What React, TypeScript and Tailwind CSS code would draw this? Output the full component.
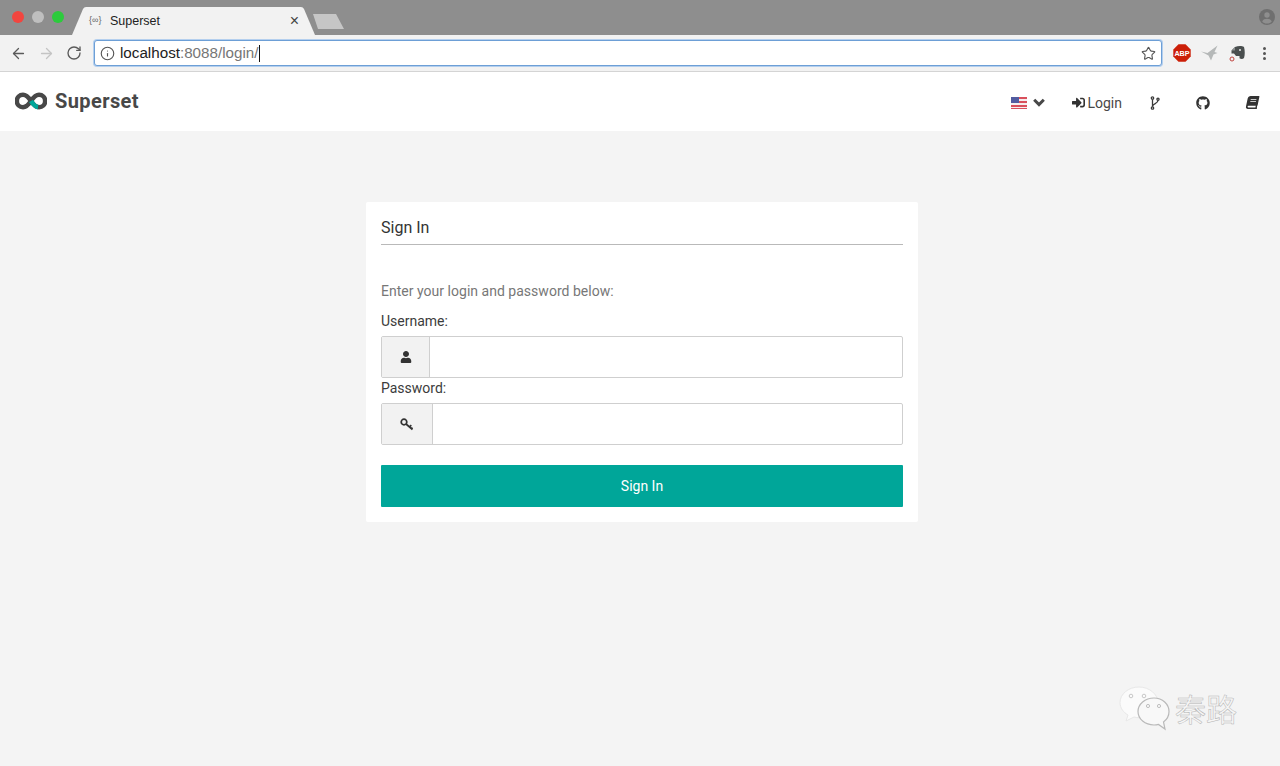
import { FaBook, FaGithub, FaSignInAlt, FaUser } from 'react-icons/fa';
import { ArrowLeft, ArrowRight, Info, RotateCw, Star } from 'lucide-react';

function SupersetLogo() {
  return (
    <svg className="mb-[2px]" width="32" height="18" viewBox="0 0 32 18" fill="none">
      <path d="M16 9C13 4.500 11 2.800 8 2.800a6.200 6.200 0 0 0 0 12.400c3 0 5-1.700 8-6.200c3-4.500 5-6.200 8-6.200a6.200 6.200 0 0 1 0 12.400c-3 0-5-1.700-8-6.200Z" stroke="#484848" strokeWidth="4.600" />
      <path d="M16 9c2.500 3.800 4.500 5.800 7 6.100" stroke="#00a699" strokeWidth="4.600" />
    </svg>
  );
}

function UsFlag() {
  return (
    <svg width="16" height="12" viewBox="0 0 16 12">
      <rect width="16" height="12" fill="#f5eeee" />
      <rect y="0" width="16" height="2" fill="#d9505c" />
      <rect y="4" width="16" height="2" fill="#d9505c" />
      <rect y="8" width="16" height="2" fill="#d9505c" />
      <rect y="11" width="16" height="1" fill="#d9505c" />
      <rect width="8" height="6" fill="#525ca0" />
    </svg>
  );
}

function ChevronIcon() {
  return (
    <svg width="12" height="9" viewBox="0 0 12 9" fill="none" stroke="#484848" strokeWidth="3">
      <path d="M1.200 1.800 6 6.600l4.800-4.800" />
    </svg>
  );
}

function ForkIcon() {
  return (
    <svg width="10" height="14" viewBox="0 0 10 14" fill="none" stroke="#3a3a3a" strokeWidth="1.300">
      <circle cx="2.500" cy="2" r="1.200" />
      <circle cx="8" cy="3.200" r="1.100" />
      <circle cx="2.500" cy="12" r="1.200" />
      <path d="M2.500 3.200v7.600M8 4.300C8 8 3 7 2.500 10.300" />
    </svg>
  );
}

function KeyIcon() {
  return (
    <svg width="14" height="13" viewBox="0 0 14 13" fill="none" stroke="#333" strokeWidth="1.700">
      <circle cx="4" cy="4" r="2.800" />
      <path d="M6 6l6.500 5.500M9.500 9l1.800-1.800M11.500 10.700l1-1" />
    </svg>
  );
}

function ProfileIcon() {
  return (
    <svg width="16" height="16" viewBox="0 0 16 16">
      <circle cx="8" cy="8" r="8" fill="#6f6f6f" />
      <circle cx="8" cy="6" r="2.700" fill="#8e8e8e" />
      <path d="M3.200 12.500C4 10.500 6 9.800 8 9.800s4 .7 4.800 2.700C11.500 14 10 14.600 8 14.600s-3.500-.6-4.800-2.100Z" fill="#8e8e8e" />
    </svg>
  );
}

function AbpIcon() {
  return (
    <svg width="18" height="18" viewBox="0 0 18 18">
      <polygon points="5.500,0.300 12.500,0.300 17.700,5.500 17.700,12.500 12.500,17.700 5.500,17.700 0.300,12.500 0.300,5.500" fill="#cc1f08" />
      <text x="9" y="11.700" textAnchor="middle" fontSize="7.200" fontWeight="700" fill="#fff" fontFamily="Liberation Sans, sans-serif">ABP</text>
    </svg>
  );
}

function BirdIcon() {
  return (
    <svg width="17" height="16" viewBox="0 0 17 16">
      <path d="M0 6.500l6.500 1.500L16.500.5 13.500 7l3 1-4 1.500L10 15.500 7.500 10.500Z" fill="#b5b8b8" />
    </svg>
  );
}

function EvernoteIcon() {
  return (
    <svg width="17" height="17" viewBox="0 0 17 17">
      <path d="M2.500 5.500 6 2c3-1.200 7-1.200 9 0 1 3.500 1 8 0 11-1 1.200-3.200 1.200-4.500.2V11H7L5 8.500H2.500Z" fill="#4a4f4f" />
      <path d="M6 2v3.500H2.500Z" fill="#8a8e8e" />
      <circle cx="11" cy="5" r="1" fill="#e8e8e8" />
      <circle cx="3" cy="14" r="2" fill="#f2f2f2" stroke="#c0443f" strokeWidth="1" />
    </svg>
  );
}

function WechatMark() {
  return (
    <svg width="52" height="46" viewBox="0 0 52 46">
      <path d="M20 2C9.500 2 1 9 1 17.500c0 5.500 3.500 10 8 12.500l-2 6 8-4c2 .5 3.500.7 5 .7C30.500 32.700 39 25.500 39 17.500S30.500 2 20 2Z" fill="#fbfbfb" stroke="#e8e8e8" />
      <path d="M35 13c-9 0-16 6-16 13.500S26 40 35 40c1.500 0 3-.2 4.500-.6L46 44l-1.500-7c3.500-2.500 5.500-6.200 5.500-10.500C50 19 43.500 13 35 13Z" fill="#f8f8f8" stroke="#b9b9b9" strokeWidth="1.200" />
      <circle cx="12" cy="11" r="1.800" fill="none" stroke="#c8c8c8" />
      <circle cx="25" cy="11" r="1.800" fill="none" stroke="#c8c8c8" />
      <circle cx="29" cy="21" r="1.600" fill="none" stroke="#c0c0c0" />
      <circle cx="40" cy="21" r="1.600" fill="none" stroke="#c0c0c0" />
    </svg>
  );
}

function Field({ label, addonWidth, icon }: { label: string; addonWidth: string; icon: React.ReactNode }) {
  return (
    <div>
      <div className="text-sm leading-[20px] text-[#3c3c3c]">{label}</div>
      <div className="mt-[5px] flex h-[42px] rounded-[2px] border border-[#cfcfcf] bg-white">
        <div className={`${addonWidth} flex items-center justify-center border-r border-[#cfcfcf] bg-[#f2f2f2] text-[#333]`}>
          {icon}
        </div>
        <div className="flex-1" />
      </div>
    </div>
  );
}

export default function App() {
  return (
    <div className="relative flex h-[766px] w-[1280px] flex-col overflow-hidden bg-[#f4f4f4] font-['Roboto',sans-serif]">
      {/* Browser title bar */}
      <div className="flex h-[35px] items-end bg-[#8e8e8e] pr-[5px]">
        <div className="flex h-full items-center gap-[8px] pb-[2px] pl-[12px]">
          <span className="h-3 w-3 rounded-full bg-[#f2453f]" />
          <span className="h-3 w-3 rounded-full bg-[#bfbfbf]" />
          <span className="h-3 w-3 rounded-full bg-[#2ccb3c]" />
        </div>
        <div className="relative ml-[8px] flex h-[28px] w-[243px] items-center pl-[17px] pr-[16px]">
          <svg className="absolute inset-0" width="243" height="28" viewBox="0 0 243 28">
            <path d="M0 28 11 2Q12 0 14 0H229Q231 0 232 2L243 28Z" fill="#f2f2f2" />
          </svg>
          <span className="relative w-[21px] font-['Liberation_Sans',sans-serif] text-[9px] text-[#666]">{'{∞}'}</span>
          <span className="relative font-['Liberation_Sans',sans-serif] text-[12.500px] text-[#222]">Superset</span>
          <span className="relative ml-auto font-['Liberation_Sans',sans-serif] text-[16px] leading-none text-[#444]">×</span>
        </div>
        <svg className="mb-[5px] ml-[-3px]" width="33" height="16" viewBox="0 0 33 16">
          <path d="M1 0H24L32 15H6Z" fill="#c6c6c6" />
        </svg>
        <div className="mb-[10px] ml-auto"><ProfileIcon /></div>
      </div>

      {/* Browser toolbar */}
      <div className="flex h-[37px] items-center border-b border-[#d4d4d4] bg-[#f2f2f2] pl-[10px] pr-[8px]">
        <ArrowLeft size={17} color="#5a5a5a" strokeWidth={1.800} />
        <ArrowRight className="ml-[11px]" size={17} color="#c4c4c4" strokeWidth={1.800} />
        <RotateCw className="ml-[11px]" size={16} color="#5a5a5a" strokeWidth={2} />
        <div className="ml-[12px] flex h-[26px] w-[1068px] items-center rounded-[3px] border border-[#6d9fd6] bg-white pl-[5px] pr-[5px] font-['Liberation_Sans',sans-serif] text-[15.200px] shadow-[0_0_0_1px_#b4cfee]">
          <Info size={15} color="#555" strokeWidth={1.800} />
          <span className="ml-[5px] text-[#222]">localhost</span>
          <span className="text-[#767676]">:8088/login/</span>
          <span className="h-[17px] w-px bg-[#111]" />
          <Star className="ml-auto" size={15} color="#555" strokeWidth={1.800} />
        </div>
        <div className="ml-[11px]"><AbpIcon /></div>
        <div className="ml-[10px]"><BirdIcon /></div>
        <div className="ml-[11px]"><EvernoteIcon /></div>
        <div className="ml-[17px] flex flex-col gap-[2px]">
          <span className="h-[3px] w-[3px] rounded-full bg-[#555]" />
          <span className="h-[3px] w-[3px] rounded-full bg-[#555]" />
          <span className="h-[3px] w-[3px] rounded-full bg-[#555]" />
        </div>
      </div>

      {/* Navbar */}
      <div className="flex h-[59px] items-center bg-white pl-[15px]">
        <SupersetLogo />
        <span className="mb-[2px] ml-[8px] text-[20px] font-bold tracking-[0.4px] text-[#484848]">Superset</span>
        <div className="ml-auto flex items-center pt-[2px] text-sm text-[#484848]">
          <UsFlag />
          <div className="ml-[6px]"><ChevronIcon /></div>
          <FaSignInAlt className="ml-[27px]" size={13} color="#333" />
          <span className="ml-[2px]">Login</span>
          <div className="ml-[28px]"><ForkIcon /></div>
          <FaGithub className="ml-[36px]" size={14} color="#333" />
          <FaBook className="ml-[36px] -skew-x-12" size={13} color="#333" />
          <div className="w-[21px]" />
        </div>
      </div>

      {/* Login card */}
      <div className="ml-[366px] mt-[71px] h-[320px] w-[552px] rounded-[2px] bg-white px-[15px] pt-[16px]">
        <div className="h-[27px] border-b border-[#b9b9b9] text-[16px] leading-[20px] text-[#333]">Sign In</div>
        <div className="mt-[36px] text-sm leading-[20px] tracking-[0.02px] text-[#777]">Enter your login and password below:</div>
        <div className="mt-[10px]">
          <Field label="Username:" addonWidth="w-[48px]" icon={<FaUser size={12} />} />
        </div>
        <div>
          <Field label="Password:" addonWidth="w-[51px]" icon={<KeyIcon />} />
        </div>
        <button className="mt-[20px] flex h-[42px] w-full items-center justify-center rounded-[1px] bg-[#00a699] text-sm text-white">
          Sign In
        </button>
      </div>

      {/* WeChat watermark */}
      <div className="absolute left-[1119px] top-[685px] flex items-center">
        <WechatMark />
        <span className="ml-[4px] mt-[-2px] font-['Noto_Sans_CJK_SC',sans-serif] text-[31px] leading-none text-[#f6f6f6] [-webkit-text-stroke:0.5px_#b4b4b4]">秦路</span>
      </div>
    </div>
  );
}
